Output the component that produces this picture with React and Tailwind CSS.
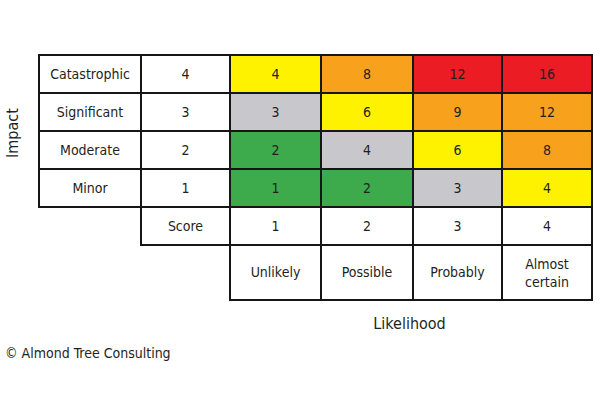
const rows = [
  { label: "Catastrophic", score: 4, cells: [["4", "y"], ["8", "o"], ["12", "r"], ["16", "r"]] },
  { label: "Significant", score: 3, cells: [["3", "g"], ["6", "y"], ["9", "o"], ["12", "o"]] },
  { label: "Moderate", score: 2, cells: [["2", "n"], ["4", "g"], ["6", "y"], ["8", "o"]] },
  { label: "Minor", score: 1, cells: [["1", "n"], ["2", "n"], ["3", "g"], ["4", "y"]] },
];

const fill = {
  y: "bg-[#fff200]",
  o: "bg-[#f7a11d]",
  r: "bg-[#ec1c24]",
  g: "bg-[#c8c8cc]",
  n: "bg-[#3dab4b]",
};

const cell = "border-2 border-[#161616] text-center align-middle";

export default function App() {
  return (
    <div className="w-[600px] h-[400px] bg-white text-[#231f20] font-['DejaVu_Sans_Condensed','DejaVu_Sans',sans-serif] text-[14px] pt-[54px] relative">
      <div className="flex">
        <div className="w-[38px] h-[158px] pr-[12px] flex items-center justify-center">
          <span className="-rotate-90 text-[16px] whitespace-nowrap">Impact</span>
        </div>
        <table className="table-fixed border-collapse w-[553px]">
          <colgroup>
            <col className="w-[102px]" />
            <col className="w-[89px]" />
            <col className="w-[91px]" />
            <col className="w-[92px]" />
            <col className="w-[89px]" />
            <col className="w-[90px]" />
          </colgroup>
          <tbody>
            {rows.map((r) => (
              <tr key={r.label} className="h-[38px]">
                <td className={cell}>{r.label}</td>
                <td className={cell}>{r.score}</td>
                {r.cells.map(([v, c], i) => (
                  <td key={i} className={`${cell} ${fill[c]}`}>{v}</td>
                ))}
              </tr>
            ))}
            <tr className="h-[38px]">
              <td></td>
              <td className={cell}>Score</td>
              <td className={cell}>1</td>
              <td className={cell}>2</td>
              <td className={cell}>3</td>
              <td className={cell}>4</td>
            </tr>
            <tr className="h-[55px]">
              <td></td>
              <td></td>
              <td className={cell}>Unlikely</td>
              <td className={cell}>Possible</td>
              <td className={cell}>Probably</td>
              <td className={`${cell} leading-[18px]`}>Almost<br />certain</td>
            </tr>
          </tbody>
        </table>
      </div>
      <div className="pl-[229px] w-[590px] text-center text-[16px] mt-[11px]">Likelihood</div>
      <div className="pl-[5px] mt-[7px] text-[14px]">© Almond Tree Consulting</div>
    </div>
  );
}
